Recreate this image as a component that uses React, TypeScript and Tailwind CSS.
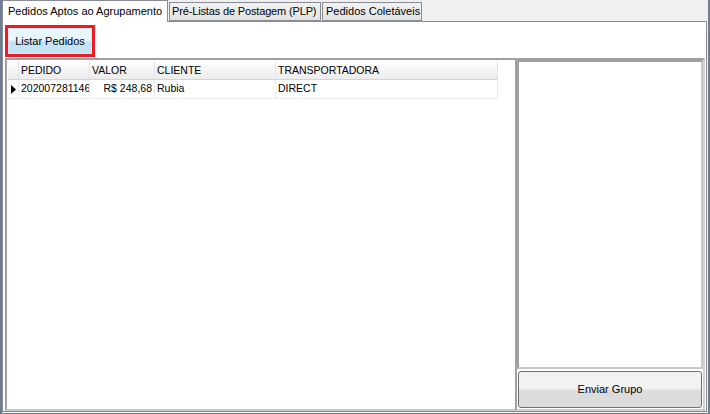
import React from 'react';

const font = { fontFamily: '"Liberation Sans", Arial, sans-serif' };

const columns = [
  { label: 'PEDIDO', width: 'w-[71px]' },
  { label: 'VALOR', width: 'w-[65px]' },
  { label: 'CLIENTE', width: 'w-[121px]' },
  { label: 'TRANSPORTADORA', width: 'w-[222px]' },
];

const Tabs = () => (
  <div className="flex items-end h-[22px] relative z-10 whitespace-nowrap">
    <div className="h-[22px] w-[166px] shrink-0 bg-white border border-b-0 border-[#898c95] flex items-center pl-[5px] text-[11px] text-black">
      Pedidos Aptos ao Agrupamento
    </div>
    <div className="h-[19px] w-[152px] shrink-0 ml-[1px] mb-[1px] bg-gradient-to-b from-[#f2f2f2] to-[#e3e3e3] border border-[#898c95] flex items-center pl-[2px] text-[11px] tracking-[-0.15px] text-black">
      Pré-Listas de Postagem (PLP)
    </div>
    <div className="h-[19px] w-[100px] shrink-0 ml-[1px] mb-[1px] bg-gradient-to-b from-[#f2f2f2] to-[#e3e3e3] border border-[#898c95] flex items-center pl-[3px] text-[11px] text-black">
      Pedidos Coletáveis
    </div>
  </div>
);

const Grid = () => (
  <div className="flex-1 flex flex-col border-t-2 border-l-2 border-b-2 border-t-[#a0a0a0] border-l-[#a0a0a0] border-b-[#c8c8c8] bg-white pt-[1px] pl-[1px]">
    <div className="flex h-[19px] w-[490px] bg-gradient-to-b from-white to-[#ececec] border-b border-[#d5d5d5] text-[10.5px] text-black">
      <div className="w-[11px] border-r border-[#e3e3e3]" />
      {columns.map((c) => (
        <div key={c.label} className={`${c.width} border-r border-[#e3e3e3] flex items-center pl-[2px] leading-none`}>
          {c.label}
        </div>
      ))}
    </div>
    <div className="flex h-[19px] w-[490px] border-b border-[#ececec] text-[10.5px] text-black">
      <div className="w-[11px] border-r border-[#ececec] flex items-center justify-center">
        <svg width="5" height="9" viewBox="0 0 5 9">
          <path d="M0 0 L5 4.5 L0 9 Z" fill="#000" />
        </svg>
      </div>
      <div className="w-[71px] border-r border-[#ececec] flex items-center pl-[2px] overflow-hidden whitespace-nowrap">
        202007281146
      </div>
      <div className="w-[65px] border-r border-[#ececec] flex items-center justify-end pr-[2px]">R$ 248,68</div>
      <div className="w-[121px] border-r border-[#ececec] flex items-center pl-[2px]">Rubia</div>
      <div className="w-[222px] border-r border-[#ececec] flex items-center pl-[2px]">DIRECT</div>
    </div>
  </div>
);

const SidePanel = () => (
  <div className="w-[190px] flex flex-col border-2 border-[#a0a0a0] border-r-[#d0d0d0] border-b-[#d0d0d0] pb-[1px]">
    <div className="flex-1 border-2 border-[#a0a0a0] border-r-[#c8c8c8] border-b-[#c8c8c8] bg-white" />
    <button className="h-[37px] mt-[2px] mx-[1px] rounded-[3px] border border-[#707070] bg-gradient-to-b from-[#f2f2f2] from-45% to-[#dcdcdc] to-55% text-[11px] text-black">
      Enviar Grupo
    </button>
  </div>
);

export default function App() {
  return (
    <div style={font} className="w-[710px] h-[414px] bg-[#f0f0f0] flex flex-col border-l-2 border-r-2 border-b border-[#6f7d90] overflow-hidden">
      <Tabs />
      <div className="flex-1 mr-[1px] mb-[1px] -mt-[1px] border border-[#898c95] bg-white flex flex-col pl-[2px] pr-[1px]">
        <div className="mt-[3px] w-[90px] h-[32px] border-[3px] border-[#ed1c24] flex">
          <button className="flex-1 border border-[#cfe6f5] bg-gradient-to-b from-[#eaf6fd] from-45% to-[#c4e4f6] to-55% text-[11px] text-black text-center whitespace-nowrap">
            Listar Pedidos
          </button>
        </div>
        <div className="flex-1 flex mt-[1px]">
          <Grid />
          <SidePanel />
        </div>
      </div>
    </div>
  );
}
